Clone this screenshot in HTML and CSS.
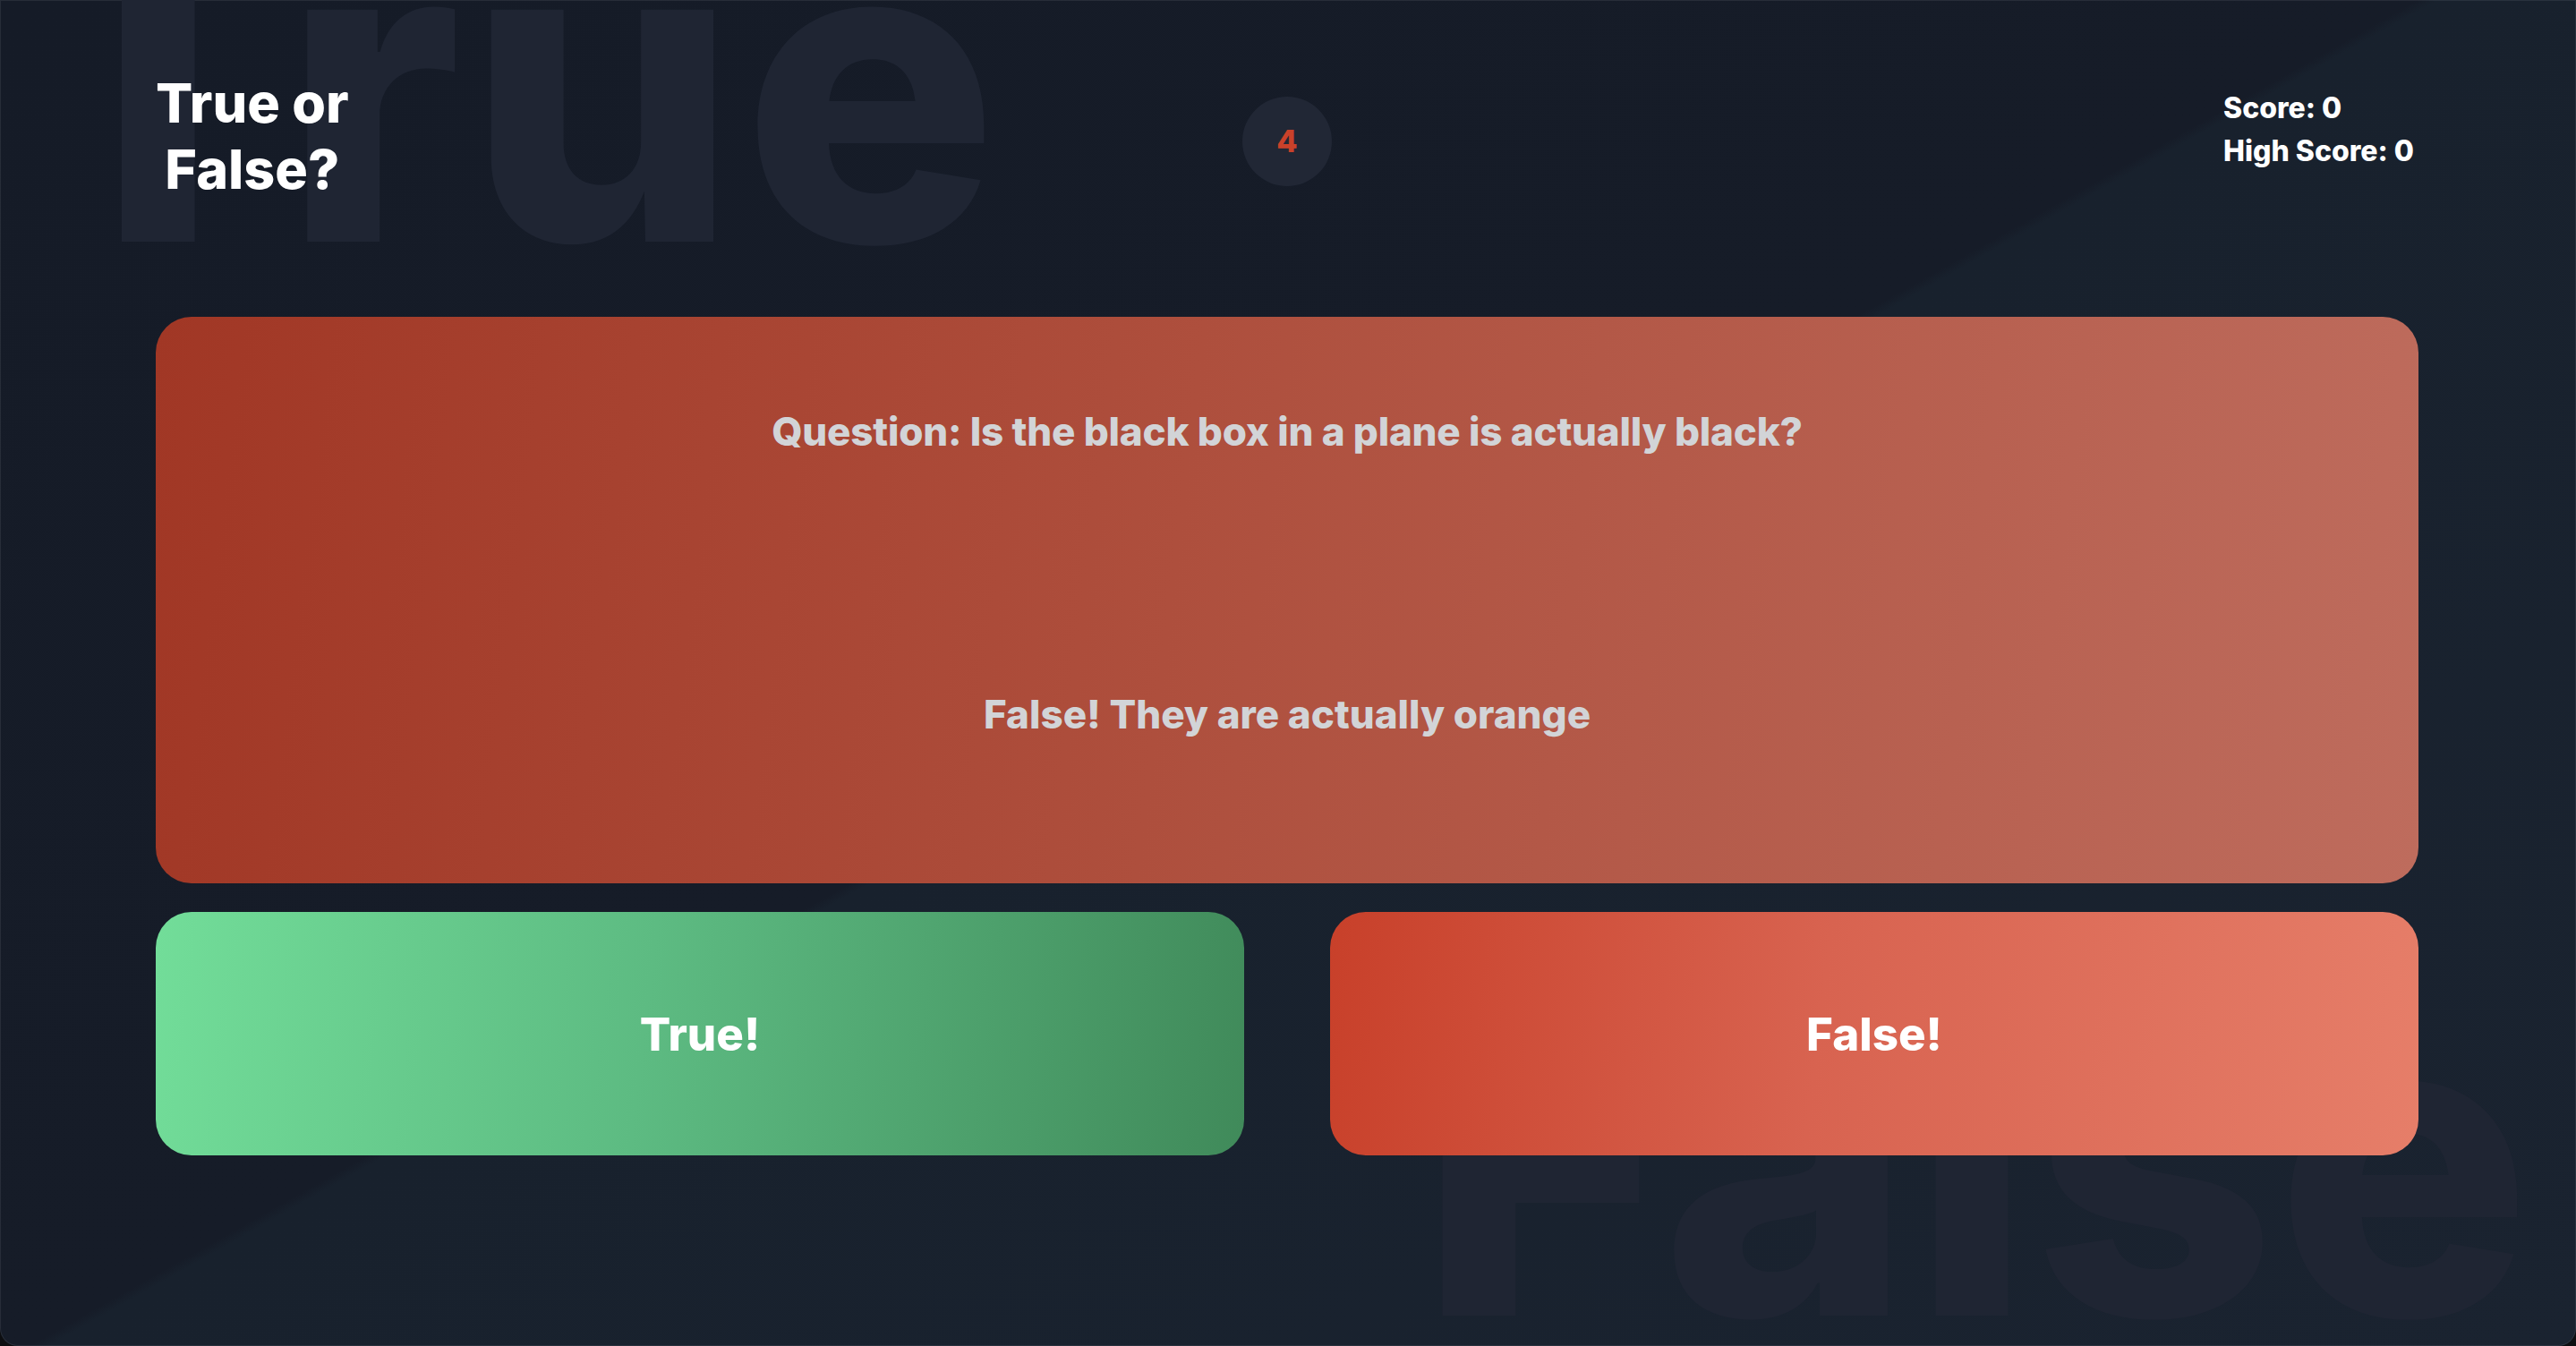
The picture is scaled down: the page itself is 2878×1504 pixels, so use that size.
FILE: index.html
```html
<!DOCTYPE html>
<html lang="en">
<head>
<meta charset="utf-8">
<title>True or False?</title>
<link rel="stylesheet" href="styles.css">
</head>
<body>
<div class="app">
  <div class="bg-word bg-true" aria-hidden="true">True</div>
  <div class="bg-word bg-false" aria-hidden="true">False</div>
  <main class="content">
    <header class="header">
      <h1 class="title"><span class="title-line">True or</span><span class="title-line">False?</span></h1>
      <div class="timer"><span class="timer-num">4</span></div>
      <div class="scores">
        <div class="score-line">Score: 0</div>
        <div class="score-line">High Score: 0</div>
      </div>
    </header>
    <section class="card">
      <p class="question">Question: Is the black box in a plane is actually black?</p>
      <p class="answer">False! They are actually orange</p>
    </section>
    <div class="choices">
      <button class="choice choice-true">True!</button>
      <button class="choice choice-false">False!</button>
    </div>
  </main>
</div>
</body>
</html>
```

FILE: styles.css
```css
html, body {
  margin: 0;
  padding: 0;
  background: #0d0e11;
}

body {
  width: 2878px;
  height: 1504px;
  overflow: hidden;
  font-family: "Inter", "DejaVu Sans", sans-serif;
}

.app {
  position: relative;
  width: 2878px;
  height: 1504px;
  overflow: hidden;
  border-radius: 0 0 20px 20px;
  box-shadow: inset 0 0 0 1px rgba(120, 126, 138, 0.18);
  background: linear-gradient(150.6deg, #151b27 0%, #161c28 48.7%, #18212d 49.1%, #1a2330 100%);
}

.bg-word {
  position: absolute;
  font-size: 475px;
  font-weight: 800;
  line-height: 1;
  color: #1f2533;
  white-space: nowrap;
  z-index: 0;
  user-select: none;
}

.bg-true {
  left: 16px;
  top: -140px;
  letter-spacing: 6px;
}

.bg-false {
  right: 50px;
  top: 1060px;
}

.content {
  position: relative;
  z-index: 1;
  padding: 78px 176px 0 174px;
}

.header {
  display: grid;
  grid-template-columns: 1fr auto 1fr;
  align-items: start;
}

.title {
  justify-self: start;
  margin: 0;
  font-size: 61px;
  line-height: 74px;
  font-weight: 800;
  color: #ffffff;
  text-align: center;
  display: flex;
  flex-direction: column;
  align-items: center;
}

.title-line {
  display: block;
  height: 74px;
}

.timer {
  justify-self: center;
  margin-top: 30px;
  width: 100px;
  height: 100px;
  border-radius: 50%;
  background: #212735;
  display: flex;
  align-items: center;
  justify-content: center;
}

.timer-num {
  font-size: 34px;
  font-weight: 800;
  color: #c9412a;
  line-height: 1;
}

.scores {
  justify-self: end;
  margin-top: 19px;
  margin-right: 5px;
  font-size: 32px;
  line-height: 48px;
  font-weight: 800;
  color: #ffffff;
}

.card {
  margin-top: 128px;
  height: 633px;
  box-sizing: border-box;
  padding: 95px 40px 0;
  border-radius: 40px;
  background: linear-gradient(97deg, #a13725 0%, #ae4f3d 45%, #be6c5d 100%);
  text-align: center;
  color: #d2d4d7;
  font-size: 44px;
  font-weight: 800;
  line-height: 66px;
}

.question,
.answer {
  margin: 0;
}

.question {
  letter-spacing: -0.2px;
}

.answer {
  margin-top: 250px;
}

.choices {
  margin-top: 32px;
  display: grid;
  grid-template-columns: 1fr 1fr;
  gap: 96px;
}

.choice {
  height: 272px;
  border: none;
  border-radius: 40px;
  font-family: "Inter", "DejaVu Sans", sans-serif;
  font-size: 51px;
  font-weight: 800;
  color: #ffffff;
  display: flex;
  align-items: center;
  justify-content: center;
  padding: 0;
  cursor: pointer;
}

.choice-true {
  background: linear-gradient(97deg, #72dd99 0%, #5dbb82 45%, #408a5a 100%);
}

.choice-false {
  background: linear-gradient(97deg, #c8402a 0%, #d86350 45%, #e67e69 100%);
}
```
